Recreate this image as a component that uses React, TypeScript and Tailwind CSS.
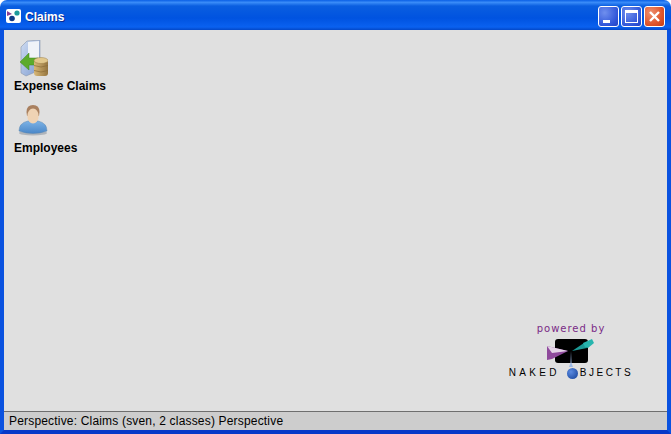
const FONT = "font-['Liberation_Sans',Arial,sans-serif]";

function AppIcon() {
  return (
    <svg width="15" height="15" viewBox="0 0 15 15">
      <rect x="0" y="0" width="15" height="14" rx="2" fill="#fff" />
      <path d="M1 2 L6 5 L1 7 Z" fill="#8a3f94" />
      <circle cx="11" cy="4" r="2.6" fill="#1f9a9a" />
      <circle cx="6" cy="9.5" r="2.8" fill="#123a86" />
    </svg>
  );
}

function MinButton() {
  return (
    <div className="w-[21px] h-[21px] rounded-[3px] border border-white bg-[radial-gradient(circle_at_30%_30%,#6f8fee,#2f55d8_70%,#2343c0)] flex items-end pl-[4px] pb-[3px]">
      <div className="w-[7px] h-[3px] bg-white" />
    </div>
  );
}

function MaxButton() {
  return (
    <div className="w-[21px] h-[21px] rounded-[3px] border border-white bg-[radial-gradient(circle_at_30%_30%,#6f8fee,#2f55d8_70%,#2343c0)] flex items-center justify-center">
      <div className="w-[13px] h-[13px] border border-white border-t-[3px]" />
    </div>
  );
}

function CloseButton() {
  return (
    <div className="w-[21px] h-[21px] rounded-[3px] border border-white bg-[radial-gradient(circle_at_30%_30%,#ee9070,#e0562c_60%,#c43c14)] flex items-center justify-center">
      <svg width="13" height="13" viewBox="0 0 13 13">
        <path d="M2 2 L11 11 M11 2 L2 11" stroke="#fff" strokeWidth="2.4" />
      </svg>
    </div>
  );
}

function ClaimsIcon() {
  return (
    <svg width="30" height="37" viewBox="0 0 30 37">
      <defs>
        <linearGradient id="sheet" x1="0" y1="0" x2="1" y2="1">
          <stop offset="0" stopColor="#cfdcf2" />
          <stop offset="1" stopColor="#7d9bd0" />
        </linearGradient>
        <linearGradient id="coin" x1="0" y1="0" x2="1" y2="0">
          <stop offset="0" stopColor="#d8b878" />
          <stop offset="1" stopColor="#94743e" />
        </linearGradient>
      </defs>
      <path d="M3 7 L9 1 L22 0 L22 30 L8 36 L3 33 Z" fill="url(#sheet)" stroke="#8a97ad" strokeWidth="0.6" />
      <path d="M10 2 L21 1 L21 22 L10 24 Z" fill="#f0f3f8" />
      <path d="M2 22 L11 13 L11 18 L20 18 L20 25 L11 25 L11 30 Z" fill="#5cab2c" stroke="#3f861a" strokeWidth="0.5" />
      <rect x="16" y="20" width="14" height="16" rx="3" fill="url(#coin)" />
      <ellipse cx="23" cy="20.5" rx="7" ry="3" fill="#e2c88c" stroke="#9a7c46" strokeWidth="0.5" />
      <path d="M16 25.5 Q23 28.5 30 25.5 M16 30.5 Q23 33.5 30 30.5" stroke="#8a6c38" strokeWidth="0.7" fill="none" />
    </svg>
  );
}

function EmployeeIcon() {
  return (
    <svg width="30" height="34" viewBox="0 0 30 34">
      <defs>
        <linearGradient id="body" x1="0" y1="0" x2="0" y2="1">
          <stop offset="0" stopColor="#7db3e6" />
          <stop offset="1" stopColor="#4a87c8" />
        </linearGradient>
      </defs>
      <ellipse cx="15" cy="31" rx="14" ry="2.5" fill="#b0b5bb" />
      <path d="M1 29 Q1 21 10 19 L20 19 Q29 21 29 29 Q15 34 1 29 Z" fill="url(#body)" stroke="#5a86b0" strokeWidth="0.5" />
      <path d="M8.5 10 Q8.5 3 15 3 Q21.5 3 21.5 10 L21 14 L9 14 Z" fill="#a9805f" />
      <ellipse cx="15" cy="14" rx="5.7" ry="7.5" fill="#efd3b4" />
    </svg>
  );
}

function LogoMark() {
  return (
    <svg width="50" height="36" viewBox="0 0 50 36">
      <rect x="9" y="5" width="33" height="24" rx="3" fill="#000" />
      <path d="M1 12 L1 26 L6 25 L22 17 Z" fill="#8f4a9c" />
      <path d="M1 12 L22 17 L6 19 Z" fill="#e4d4e7" />
      <path d="M26 17 L38 9 L41 14 Z" fill="#1c9a96" />
      <path d="M37 9 L46 5 L48 9 L42 14 L39 13 Z" fill="#27b5ae" />
      <path d="M24.5 29 L25 17 L25.5 29 L27 33 L23 33 Z" fill="#9cb9e6" />
    </svg>
  );
}

function DesktopItem({ label, icon }: { label: string; icon: React.ReactNode }) {
  return (
    <div className="flex flex-col items-start">
      <div className="pl-[4px] h-[39px] flex items-start">{icon}</div>
      <div className="text-[12px] leading-[14px] font-bold text-black">{label}</div>
    </div>
  );
}

export default function App() {
  return (
    <div className={`w-[671px] h-[434px] flex flex-col overflow-hidden ${FONT} bg-white`}>
      <div className="h-[30px] shrink-0 rounded-t-[7px] bg-[linear-gradient(180deg,#0a5fe6_0%,#3a8cf8_8%,#0a5ee0_20%,#0053e0_60%,#0a61f0_90%,#0348c8_100%)] flex items-center pl-[6px] pr-[6px] pt-[3px]">
        <AppIcon />
        <span className="ml-[4px] text-[12px] font-bold text-white [text-shadow:1px_1px_0_#0a2a90]">Claims</span>
        <div className="ml-auto flex gap-[2px]">
          <MinButton />
          <MaxButton />
          <CloseButton />
        </div>
      </div>
      <div className="flex-1 flex flex-col min-h-0 border-x-[4px] border-b-[4px] border-x-[#0a52e0] border-b-[#0838c8]">
        <div className="flex-1 flex flex-col justify-between bg-[#e0e0e0] pt-[10px] pl-[10px] pr-[32px] pb-[32px]">
          <div className="flex flex-col gap-[9px]">
            <DesktopItem label="Expense Claims" icon={<ClaimsIcon />} />
            <DesktopItem label="Employees" icon={<EmployeeIcon />} />
          </div>
          <div className="self-end flex flex-col items-center w-[128px]">
            <div className="text-[10px] leading-[12px] tracking-[1px] text-[#7a2a86] font-['DejaVu_Sans',sans-serif]">powered by</div>
            <div className="-mt-[1px] h-[34px] relative z-0"><LogoMark /></div>
            <div className="flex items-center justify-center w-[128px] text-[10px] leading-[12px] font-medium text-black whitespace-nowrap -mt-[1px]">
              <span className="tracking-[3.3px]">NAKED</span>
              <span className="w-[11px] h-[11px] shrink-0 rounded-full ml-[7px] mr-[2px] bg-[radial-gradient(circle_at_35%_35%,#5a8ae0,#123f96)]" />
              <span className="tracking-[2.5px]">BJECTS</span>
            </div>
          </div>
        </div>
        <div className="h-[19px] shrink-0 border-t border-t-[#6e6e6e] bg-[#cdcdcd] pl-[5px] text-[12px] leading-[19px] tracking-[0.18px] text-black">
          Perspective: Claims (sven, 2 classes) Perspective
        </div>
      </div>
    </div>
  );
}
